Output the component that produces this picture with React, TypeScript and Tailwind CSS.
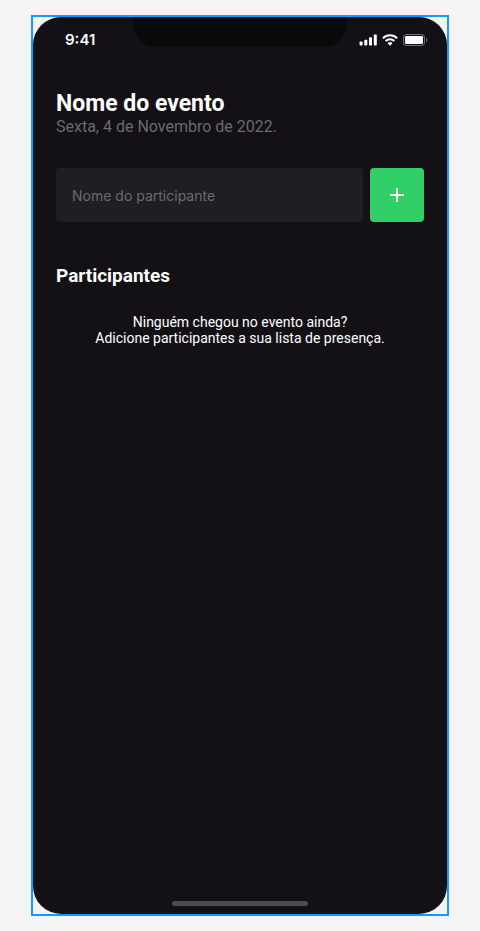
function SignalIcon() {
  return (
    <svg width="18" height="12" viewBox="0 0 18 12" fill="white" aria-hidden="true">
      <rect x="0.6" y="7.5" width="3" height="4" rx="0.7" />
      <rect x="5.3" y="5.7" width="3" height="5.8" rx="0.7" />
      <rect x="10" y="3.2" width="3" height="8.3" rx="0.7" />
      <rect x="14.8" y="0.6" width="3" height="10.9" rx="0.7" />
    </svg>
  );
}

function WifiIcon() {
  return (
    <svg width="16" height="12" viewBox="0 0 16 12" fill="none" stroke="white" aria-hidden="true">
      <path d="M0.9 4.2a10.2 10.2 0 0 1 14.2 0" strokeWidth="2" />
      <path d="M3.6 7a6.3 6.3 0 0 1 8.8 0" strokeWidth="2" />
      <path d="M8 11.8 5.5 9.2a3.6 3.6 0 0 1 5 0Z" fill="white" stroke="none" />
    </svg>
  );
}

function BatteryIcon() {
  return (
    <svg width="25" height="12" viewBox="0 0 25 12" fill="none" aria-hidden="true">
      <rect x="0.5" y="0.5" width="21" height="11" rx="2.6" stroke="white" strokeOpacity="0.4" />
      <rect x="2" y="2" width="18" height="8" rx="1.2" fill="white" />
      <path d="M23 4v4c1.9-.8 1.9-3.2 0-4Z" fill="white" fillOpacity="0.4" />
    </svg>
  );
}

function StatusBar() {
  return (
    <header className="grid grid-cols-[minmax(0,1fr)_minmax(0,214px)_minmax(0,1fr)] grid-rows-[30px]">
      <div className="pt-[13px] pl-8 font-['Inter',sans-serif] text-[15px] leading-5 font-semibold">
        9:41
      </div>
      <div className="rounded-b-3xl bg-[#090909]" />
      <div className="flex items-start justify-end gap-[5px] pt-[17px] pr-[19px]">
        <SignalIcon />
        <WifiIcon />
        <BatteryIcon />
      </div>
    </header>
  );
}

export default function App() {
  return (
    <div className="min-h-screen bg-[#f4f4f4] px-[31px] py-[15px] font-['Roboto',sans-serif] text-white">
      <div className="border-2 border-[#1599fc]">
        <div className="flex min-h-[897px] flex-col overflow-hidden rounded-[28px] bg-[#131016]">
          <StatusBar />
          <main className="flex-1 px-[23px] pt-11">
            <h1 className="text-[23px] leading-[26px] font-bold">Nome do evento</h1>
            <p className="text-base leading-5 text-[#6b6b6b]">Sexta, 4 de Novembro de 2022.</p>
            <form className="mt-[31px] flex gap-[7px]" onSubmit={(event) => event.preventDefault()}>
              <input
                type="text"
                aria-label="Nome do participante"
                placeholder="Nome do participante"
                className="h-[54px] min-w-0 flex-1 rounded bg-[#1f1e25] px-4 font-['Inter',sans-serif] text-sm outline-none placeholder:text-[#6b6b6b]"
              />
              <button
                type="submit"
                aria-label="Adicionar participante"
                className="flex size-[54px] items-center justify-center rounded bg-[#31cf67]"
              >
                <svg width="14" height="14" viewBox="0 0 14 14" fill="none" stroke="white" strokeWidth="2" aria-hidden="true">
                  <path d="M7 0v14M0 7h14" />
                </svg>
              </button>
            </form>
            <h2 className="mt-10 text-[19px] leading-7 font-bold">Participantes</h2>
            <p className="mt-6 text-center text-sm leading-4">
              Ninguém chegou no evento ainda?
              <br />
              Adicione participantes a sua lista de presença.
            </p>
          </main>
          <div className="mx-auto mb-2 h-[5px] w-[136px] rounded-full bg-[#4d4b50]" />
        </div>
      </div>
    </div>
  );
}
